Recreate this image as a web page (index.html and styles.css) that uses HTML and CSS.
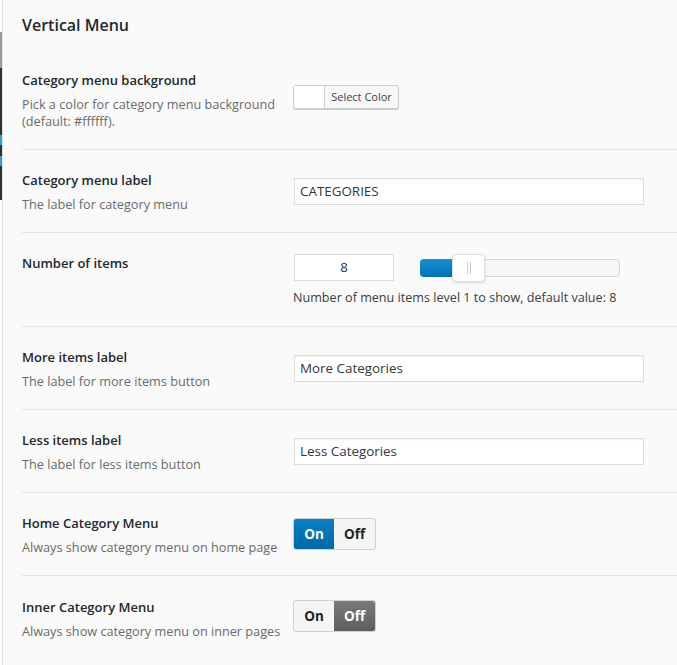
FILE: index.html
```html
<!DOCTYPE html>
<html>
<head>
<meta charset="utf-8">
<link rel="stylesheet" href="styles.css">
</head>
<body>
<div class="edge">
  <div class="edge-seg grey"></div>
  <div class="edge-seg dark"><span class="blue b1"></span><span class="blue b2"></span></div>
</div>
<main class="panel">
  <h2 class="title">Vertical Menu</h2>

  <section class="row first">
    <div class="label-col">
      <div class="label">Category menu background</div>
      <div class="desc">Pick a color for category menu background (default: #ffffff).</div>
    </div>
    <div class="control-col ctl-color">
      <button class="color-btn"><span class="swatch"></span><span class="color-text">Select Color</span></button>
    </div>
  </section>

  <section class="row">
    <div class="label-col">
      <div class="label">Category menu label</div>
      <div class="desc">The label for category menu</div>
    </div>
    <div class="control-col ctl-input">
      <div class="text-input">CATEGORIES</div>
    </div>
  </section>

  <section class="row">
    <div class="label-col">
      <div class="label">Number of items</div>
    </div>
    <div class="control-col ctl-number">
      <div class="number-line">
        <div class="number-input">8</div>
        <div class="slider">
          <div class="slider-fill"></div>
          <div class="slider-thumb"><span></span><span></span></div>
        </div>
      </div>
      <div class="help">Number of menu items level 1 to show, default value: 8</div>
    </div>
  </section>

  <section class="row">
    <div class="label-col">
      <div class="label">More items label</div>
      <div class="desc">The label for more items button</div>
    </div>
    <div class="control-col ctl-input">
      <div class="text-input">More Categories</div>
    </div>
  </section>

  <section class="row">
    <div class="label-col">
      <div class="label">Less items label</div>
      <div class="desc">The label for less items button</div>
    </div>
    <div class="control-col ctl-input">
      <div class="text-input">Less Categories</div>
    </div>
  </section>

  <section class="row">
    <div class="label-col">
      <div class="label">Home Category Menu</div>
      <div class="desc">Always show category menu on home page</div>
    </div>
    <div class="control-col ctl-toggle">
      <div class="toggle"><span class="opt on active-blue">On</span><span class="opt off">Off</span></div>
    </div>
  </section>

  <section class="row">
    <div class="label-col">
      <div class="label">Inner Category Menu</div>
      <div class="desc">Always show category menu on inner pages</div>
    </div>
    <div class="control-col ctl-toggle2">
      <div class="toggle"><span class="opt on">On</span><span class="opt off active-grey">Off</span></div>
    </div>
  </section>
</main>
</body>
</html>
```
FILE: styles.css
```css
html, body {
  margin: 0;
  padding: 0;
  background: #fafafa;
}
body {
  font-family: "Open Sans", "Noto Sans", sans-serif;
  color: #23282d;
  height: 665px;
  overflow: hidden;
  position: relative;
}
.edge {
  position: absolute;
  left: 0;
  top: 0;
  bottom: 0;
  width: 2px;
  border-right: 1px solid #e2e2e2;
}
.edge-seg.grey {
  margin-top: 32px;
  height: 36px;
  background: #9a9a9a;
}
.edge-seg.dark {
  height: 132px;
  background: #333;
  position: relative;
}
.blue {
  position: absolute;
  left: 0;
  width: 2px;
  height: 10px;
  background: #2ea2cc;
}
.b1 { top: 67px; }
.b2 { top: 88px; }

.panel {
  padding-left: 22px;
}
.title {
  margin: 0;
  padding-top: 14px;
  font-size: 16px;
  line-height: 22px;
  font-weight: 600;
  color: #23282d;
}
.row {
  display: flex;
  border-top: 1px solid #e5e5e5;
  padding: 20px 0 19px;
}
.row.first {
  border-top: none;
  margin-top: 14px;
}
.row:last-child {
  padding-top: 21px;
}
.label-col {
  width: 271px;
  flex: none;
}
.label {
  font-size: 13px;
  font-weight: 600;
  line-height: 20px;
}
.desc {
  margin-top: 6px;
  font-size: 12.7px;
  line-height: 17px;
  color: #6a6a6a;
  width: 262px;
}
.control-col {
  flex: 1;
}
.ctl-color { padding-top: 15px; }
.ctl-input { padding-top: 8px; padding-left: 1px; }
.ctl-number { padding-top: 1px; padding-left: 1px; }
.ctl-toggle { padding-top: 5px; }
.ctl-toggle2 { padding-top: 3px; }

.color-btn {
  display: flex;
  padding: 0;
  margin: 0;
  height: 24px;
  width: 106px;
  border: 1px solid #ccc;
  border-radius: 3px;
  background: #f7f7f7;
  box-shadow: 0 1px 0 #ccc;
  overflow: hidden;
  font-family: inherit;
  cursor: pointer;
}
.swatch {
  width: 30px;
  height: 100%;
  background: #fff;
  border-right: 1px solid #ccc;
}
.color-text {
  flex: 1;
  font-size: 11px;
  line-height: 22px;
  color: #444;
  text-align: center;
}
.text-input {
  box-sizing: border-box;
  width: 350px;
  height: 27px;
  border: 1px solid #ddd;
  background: #fff;
  box-shadow: inset 0 1px 2px rgba(0,0,0,0.05);
  padding: 0 5px;
  font-size: 13.4px;
  line-height: 25px;
  color: #32373c;
}
.number-line {
  display: flex;
  align-items: center;
}
.number-input {
  box-sizing: border-box;
  width: 100px;
  height: 27px;
  border: 1px solid #ddd;
  background: #fff;
  text-align: center;
  font-size: 13.4px;
  line-height: 25px;
  color: #32373c;
}
.slider {
  position: relative;
  margin-left: 26px;
  box-sizing: border-box;
  width: 200px;
  height: 18px;
  border: 1px solid #d8d8d8;
  border-radius: 4px;
  background: #f6f6f6;
}
.slider-fill {
  position: absolute;
  left: -1px;
  top: -1px;
  bottom: -1px;
  width: 40px;
  border-radius: 4px 0 0 4px;
  background: linear-gradient(#1a8ed0, #0073b5);
}
.slider-thumb {
  position: absolute;
  left: 31px;
  top: -6px;
  box-sizing: border-box;
  width: 33px;
  height: 28px;
  border: 1px solid #ddd;
  border-radius: 4px;
  background: #fff;
  box-shadow: 0 1px 3px rgba(0,0,0,0.12);
  display: flex;
  justify-content: center;
  align-items: center;
  gap: 2px;
}
.slider-thumb span {
  width: 1px;
  height: 12px;
  background: #ccc;
}
.help {
  margin-top: 8px;
  margin-bottom: 1px;
  font-size: 12.6px;
  line-height: 17px;
  color: #3c3c3c;
  margin-left: -1px;
}
.toggle {
  display: inline-flex;
  height: 32px;
  box-sizing: border-box;
  border: 1px solid #d0d0d0;
  border-radius: 3px;
  overflow: hidden;
  background: #f5f5f5;
}
.opt {
  width: 40px;
  text-align: center;
  font-size: 13.5px;
  font-weight: 700;
  line-height: 30px;
  color: #222;
}
.opt.off { width: 41px; }
.active-blue {
  background: linear-gradient(#0a7fc2, #0068a6);
  color: #fff;
}
.active-grey {
  background: linear-gradient(#7a7a7a, #5e5e5e);
  color: #fff;
}
```
